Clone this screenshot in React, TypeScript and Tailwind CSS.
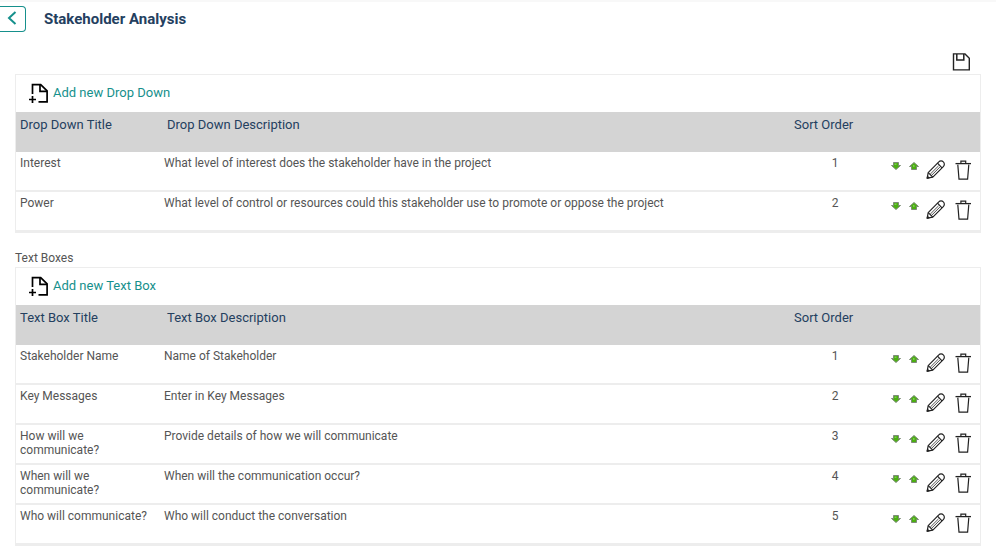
import type { ReactNode } from 'react';

type Item = { title: string; description: string };

const dropDowns: Item[] = [
  { title: 'Interest', description: 'What level of interest does the stakeholder have in the project' },
  {
    title: 'Power',
    description: 'What level of control or resources could this stakeholder use to promote or oppose the project',
  },
];

const textBoxes: Item[] = [
  { title: 'Stakeholder Name', description: 'Name of Stakeholder' },
  { title: 'Key Messages', description: 'Enter in Key Messages' },
  { title: 'How will we communicate?', description: 'Provide details of how we will communicate' },
  { title: 'When will we communicate?', description: 'When will the communication occur?' },
  { title: 'Who will communicate?', description: 'Who will conduct the conversation' },
];

function AddFileIcon() {
  return (
    <svg width="20" height="22" viewBox="0 0 20 22" fill="none" stroke="#000" strokeWidth="1.7" aria-hidden="true">
      <path d="M4.5 12V2.6h8.2l6.4 6.2v11.1H10.5" />
      <path d="M12 2.6v6.8h7" />
      <path d="M4.5 14v7M1 17.5h7" />
    </svg>
  );
}

function SaveIcon() {
  return (
    <svg width="18" height="18" viewBox="0 0 18 18" fill="none" stroke="#222" aria-hidden="true">
      <path d="M1.5.9H13l4.3 4.3v11.7H1.5z" strokeWidth="1.4" />
      <path d="M4.8 1v6h7V1" strokeWidth="1.5" />
    </svg>
  );
}

function ArrowIcon({ up = false }: { up?: boolean }) {
  return (
    <svg width="10" height="8" viewBox="0 0 10 8" aria-hidden="true">
      <path
        d={up ? 'M2.5 7.5h5v-3h2L5 .5.5 4.5h2z' : 'M2.5.5h5v3h2L5 7.5.5 3.5h2z'}
        fill="#4bb010"
        stroke="#7d8a78"
      />
      <path d={up ? 'M4 3h1.5v2H4z' : 'M3.5 1.5h2v1.5h-2z'} fill="#7cc653" />
    </svg>
  );
}

function PencilIcon() {
  return (
    <svg width="20" height="20" viewBox="0 0 20 20" fill="none" stroke="#222" strokeWidth="1.2" strokeLinejoin="round" aria-hidden="true">
      <path d="M1.2 18.2l1-5.6L12.8 1.9a3 3 0 0 1 4.5 0 3.2 3.2 0 0 1 0 4.7L6.8 17.2z" />
      <path d="M2.2 12.6l4.6 4.6M11.5 3.2l4.5 4.6" />
      <path d="M4.2 14.2l8.4-8.4M5.4 15.5l8.4-8.4" strokeWidth="0.8" />
      <path d="M1.2 18.2l1.8-.4-1.4-1.4z" fill="#222" />
    </svg>
  );
}

function TrashIcon() {
  return (
    <svg width="16" height="20" viewBox="0 0 16 20" fill="none" stroke="#222" strokeWidth="1.2" aria-hidden="true">
      <path d="M.5 3.6H16" strokeWidth="1.3" />
      <path d="M5.9 3.4V1.1h4.8v2.3M2.8 4.6l1.2 14.6h8.6l1.2-14.6" />
    </svg>
  );
}

function IconButton({ label, className = '', children }: { label: string; className?: string; children: ReactNode }) {
  return (
    <button type="button" aria-label={label} className={`shrink-0 cursor-pointer ${className}`}>
      {children}
    </button>
  );
}

function ItemPanel({ kind, items }: { kind: string; items: Item[] }) {
  return (
    <section className="border border-[#ededed]">
      <div className="flex h-[37px] items-center pb-[2px] pl-3">
        <a href="#" className="flex items-center gap-[5px] text-[13px] leading-4 text-[#16908c]">
          <AddFileIcon />
          <span>Add new {kind}</span>
        </a>
      </div>
      <table className="w-full table-fixed border-separate border-spacing-0 text-left text-xs leading-[14px] text-[#555]">
        <thead className="bg-[#d4d4d4] text-[13px] leading-4 text-[#24405f]">
          <tr className="h-10 align-top">
            <th className="w-36 pt-[5px] pl-1 font-normal">{kind} Title</th>
            <th className="pt-[5px] pl-[7px] font-normal">{kind} Description</th>
            <th className="w-[90px] pt-[5px] pl-1 font-normal">Sort Order</th>
            <th className="w-[100px]" aria-label="Actions" />
          </tr>
        </thead>
        <tbody>
          {items.map((item, i) => (
            <tr key={item.title} className="h-10 align-top *:border-b-2 *:border-[#ededed]">
              <td className="px-1 pt-1">{item.title}</td>
              <td className="px-1 pt-1">{item.description}</td>
              <td className="pt-1 text-center">{i + 1}</td>
              <td className="pt-2 pl-[11px]">
                <div className="flex items-start">
                  <IconButton label={`Move ${item.title} down`} className="mt-[2px] mr-2">
                    <ArrowIcon />
                  </IconButton>
                  <IconButton label={`Move ${item.title} up`} className="mt-[2px] mr-[7px]">
                    <ArrowIcon up />
                  </IconButton>
                  <IconButton label={`Edit ${item.title}`} className="mr-[9px]">
                    <PencilIcon />
                  </IconButton>
                  <IconButton label={`Delete ${item.title}`}>
                    <TrashIcon />
                  </IconButton>
                </div>
              </td>
            </tr>
          ))}
        </tbody>
      </table>
    </section>
  );
}

export default function App() {
  return (
    <div className="border-t-2 border-[#f8f8f8] bg-white font-['Roboto',sans-serif] [&_svg]:block">
      <header className="flex items-center pt-1">
        <button
          type="button"
          aria-label="Back"
          className="flex h-[26px] w-[26px] items-center justify-center rounded-r border border-l-0 border-[#16908c] pr-[2px] pb-[2px] text-[#16908c]"
        >
          <svg width="10" height="14" viewBox="0 0 10 14" fill="none" stroke="currentColor" strokeWidth="2" aria-hidden="true">
            <path d="M8.5 1L2 7l6.5 6" />
          </svg>
        </button>
        <h1 className="ml-[18px] text-[15px] leading-5 font-bold text-[#24405f]">Stakeholder Analysis</h1>
      </header>
      <main className="px-[15px]">
        <div className="flex justify-end pt-[21px] pr-[11px] pb-[3px]">
          <IconButton label="Save">
            <SaveIcon />
          </IconButton>
        </div>
        <ItemPanel kind="Drop Down" items={dropDowns} />
        <h2 className="mt-[18px] mb-[2px] text-xs leading-[14px] text-[#555]">Text Boxes</h2>
        <ItemPanel kind="Text Box" items={textBoxes} />
      </main>
    </div>
  );
}
